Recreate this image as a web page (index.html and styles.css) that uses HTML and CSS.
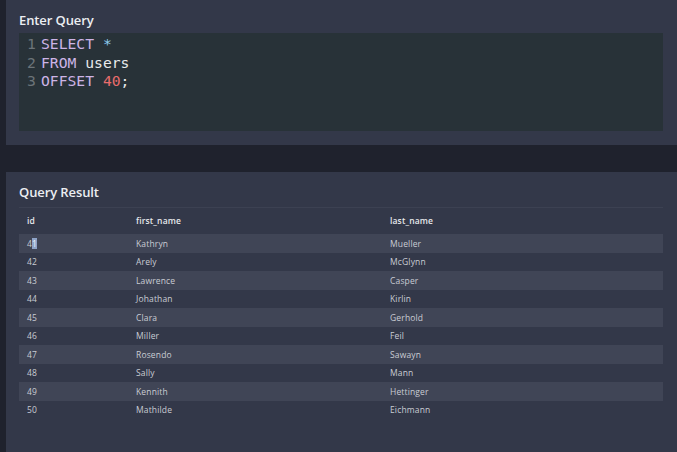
FILE: index.html
```html
<!DOCTYPE html>
<html>
<head>
<meta charset="utf-8">
<link rel="stylesheet" href="styles.css">
</head>
<body>
<div class="app">
  <section class="panel panel-query">
    <h2 class="panel-title">Enter Query</h2>
    <div class="editor">
      <div class="line"><span class="ln">1</span><span class="kw">SELECT</span> <span class="star">*</span></div>
      <div class="line"><span class="ln">2</span><span class="kw">FROM</span> <span class="id">users</span></div>
      <div class="line"><span class="ln">3</span><span class="kw">OFFSET</span> <span class="num">40</span><span class="id">;</span></div>
    </div>
  </section>
  <section class="panel panel-result">
    <h2 class="panel-title">Query Result</h2>
    <table class="result">
      <thead>
        <tr><th class="c-id">id</th><th class="c-first">first_name</th><th>last_name</th></tr>
      </thead>
      <tbody>
        <tr><td>4<span class="sel">1</span></td><td>Kathryn</td><td>Mueller</td></tr>
        <tr><td>42</td><td>Arely</td><td>McGlynn</td></tr>
        <tr><td>43</td><td>Lawrence</td><td>Casper</td></tr>
        <tr><td>44</td><td>Johathan</td><td>Kirlin</td></tr>
        <tr><td>45</td><td>Clara</td><td>Gerhold</td></tr>
        <tr><td>46</td><td>Miller</td><td>Feil</td></tr>
        <tr><td>47</td><td>Rosendo</td><td>Sawayn</td></tr>
        <tr><td>48</td><td>Sally</td><td>Mann</td></tr>
        <tr><td>49</td><td>Kennith</td><td>Hettinger</td></tr>
        <tr><td>50</td><td>Mathilde</td><td>Eichmann</td></tr>
      </tbody>
    </table>
  </section>
</div>
</body>
</html>
```
FILE: styles.css
```css
html, body {
  margin: 0;
  padding: 0;
  background: #1f222d;
  height: 100%;
  overflow: hidden;
}
body {
  font-family: "Open Sans", "Liberation Sans", sans-serif;
}
.app {
  padding-left: 6px;
  display: flex;
  flex-direction: column;
  gap: 27px;
}
.panel {
  background: #333849;
  padding: 12px 14px 14px 13px;
}
.panel-title {
  margin: 0;
  font-size: 13px;
  line-height: 16px;
  font-weight: 600;
  color: #eceef2;
  letter-spacing: -0.1px;
}
.panel-query .panel-title {
  margin-bottom: 5px;
}
.editor {
  background: #283238;
  height: 98px;
  box-sizing: border-box;
  padding: 2px 8px;
  font-family: "DejaVu Sans Mono", monospace;
  font-size: 14.7px;
  line-height: 18.5px;
  color: #e8eaec;
}
.line {
  display: block;
  white-space: pre;
}
.ln {
  display: inline-block;
  color: #6c7479;
  width: 14px;
}
.kw { color: #cdb4e6; }
.star { color: #8ed0f2; }
.id { color: #e8eaec; }
.num { color: #e86c6c; }

.panel-result {
  padding-bottom: 40px;
}
.panel-result .panel-title {
  margin-bottom: 7px;
}
.result {
  width: 100%;
  border-collapse: collapse;
  border-top: 1px solid #3c4152;
  font-size: 8.5px;
  letter-spacing: 0.15px;
}
.result th {
  text-align: left;
  font-weight: 600;
  color: #e6e8ec;
  height: 24px;
  padding: 0 8px 2px;
}
.result th.c-id { width: 93px; }
.result th.c-first { width: 238px; }
.result td {
  height: 18.5px;
  padding: 0 8px;
  color: #c9ccd4;
}
.result tbody tr:nth-child(odd) {
  background: #404556;
}
.sel {
  background: #8fa4c8;
  color: #eef2fa;
}
```
